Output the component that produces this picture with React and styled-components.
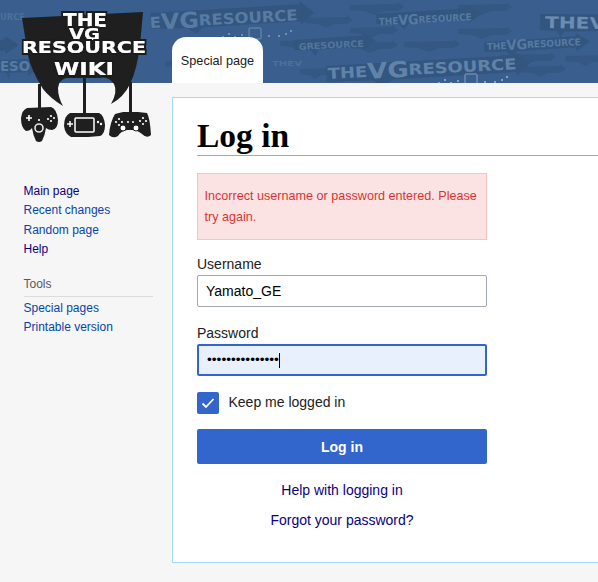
import React from "react";
import styled, { createGlobalStyle } from "styled-components";

const Global = createGlobalStyle`
  html, body { margin: 0; padding: 0; background: #f6f6f6; }
  body { font-family: "Liberation Sans", Arial, sans-serif; color: #202122; }
  * { box-sizing: border-box; }
`;

const Page = styled.div`
  position: relative;
  width: 598px;
  height: 582px;
  overflow: hidden;
  background: #f6f6f6;
`;

const Header = styled.header`
  position: relative;
  height: 83px;
  padding: 37px 0 0 172px;
  background: #3a5f8e;
  overflow: hidden;
`;

const Watermark = styled.svg`
  position: absolute;
  inset: 0;
  width: 598px;
  height: 83px;
`;

const Tab = styled.div`
  position: relative;
  width: 91px;
  height: 46px;
  padding-top: 17px;
  text-align: center;
  font-size: 12.7px;
  line-height: 15px;
  color: #202122;
  background: #fff;
  border-radius: 14px 14px 0 0;
`;

const LogoArt = styled.svg`
  position: absolute;
  left: 0;
  top: 0;
  width: 170px;
  height: 150px;
`;

const Body = styled.div`
  display: grid;
  grid-template-columns: 172px 1fr;
  padding-top: 14px;
`;

const Side = styled.nav`
  padding: 86px 19px 0 23.5px;
  font-size: 12px;
`;

const SideLink = styled.a`
  display: block;
  height: 19.4px;
  line-height: 15px;
  padding-top: 1px;
  color: ${(p) => (p.$visited ? "#0b0080" : "#0645ad")};
  text-decoration: none;
`;

const ToolsHead = styled.div`
  margin-top: 16px;
  padding-bottom: 4px;
  height: 20px;
  line-height: 15px;
  color: #54595d;
  border-bottom: 1px solid #dcdcdc;
  margin-bottom: 3px;
`;

const Content = styled.main`
  height: 466px;
  margin-right: -2px;
  padding: 21px 0 0 24px;
  background: #fff;
  border: 1px solid #a7d7f9;
`;

const Title = styled.h1`
  margin: 0 0 17px;
  height: 37px;
  font: bold 33.5px/33px "Liberation Serif", "Times New Roman", serif;
  color: #000;
  border-bottom: 1px solid #a2a9b1;
`;

const Form = styled.div`
  width: 290px;
`;

const ErrorBox = styled.div`
  height: 67px;
  padding: 12px 0 0 6.5px;
  font-size: 12.6px;
  line-height: 21px;
  color: #d33;
  background: #fbe3e4;
  border: 1px solid #fbc2c4;
`;

const Label = styled.label`
  display: block;
  height: 16px;
  margin-top: ${(p) => p.$top}px;
  margin-bottom: 3px;
  font-size: 14px;
  line-height: 16px;
  color: #202122;
`;

const Field = styled.div`
  height: 32px;
  padding: 0 8px;
  font-size: 14px;
  line-height: ${(p) => (p.$focus ? "28px" : "30px")};
  color: #000;
  background: ${(p) => (p.$focus ? "#e8f0fe" : "#fff")};
  border: ${(p) => (p.$focus ? "2px solid #36c" : "1px solid #a2a9b1")};
  border-radius: 2px;
  display: flex;
  align-items: center;
`;

const Dots = styled.span`
  font-size: 13.7px;
`;

const Caret = styled.span`
  width: 1px;
  height: 15px;
  background: #000;
`;

const CheckRow = styled.div`
  display: flex;
  align-items: center;
  gap: 10px;
  margin-top: 16px;
  font-size: 14px;
  color: #202122;
`;

const CheckBox = styled.span`
  display: flex;
  align-items: center;
  justify-content: center;
  width: 22px;
  height: 22px;
  background: #36c;
  border-radius: 2px;
`;

const CheckLabel = styled.span`
  position: relative;
  top: -1px;
  left: -0.5px;
`;

const Button = styled.button`
  display: block;
  width: 290px;
  height: 35px;
  margin-top: 15px;
  padding: 0;
  font: bold 14px "Liberation Sans", Arial, sans-serif;
  color: #fff;
  background: #36c;
  border: none;
  border-radius: 2px;
`;

const HelpLink = styled.a`
  display: block;
  height: 16px;
  margin-top: ${(p) => p.$top}px;
  font-size: 14px;
  line-height: 16px;
  text-align: center;
  color: #0b0080;
  text-decoration: none;
`;

function Arrow({ x, y, w, h = 14, rot = -3 }) {
  return (
    <polygon
      transform={`rotate(${rot} ${x} ${y})`}
      points={`${x},${y} ${x + w},${y - 1} ${x + w},${y - 4} ${x + w + 14},${y + h / 2} ${x + w},${y + h + 4} ${x + w},${y + h} ${x + w * 0.35},${y + h + 1} ${x + w * 0.3},${y + h + 7} ${x + w * 0.24},${y + h + 1} ${x},${y + h}`}
      fill="#335681"
    />
  );
}

function MiniArrow({ x, y, w = 45 }) {
  return (
    <polygon
      points={`${x},${y + 1} ${x + w},${y} ${x + w},${y - 2} ${x + w + 6},${y + 3} ${x + w},${y + 7} ${x + w * 0.7},${y + 7} ${x + w * 0.5},${y + 11} ${x + w * 0.3},${y + 7} ${x},${y + 6}`}
      fill="#345883"
    />
  );
}

function WmText({ x, y, size, width, rot = -3, color = "#6384ab", vg, rest, lead = "THE" }) {
  return (
    <text
      x={x}
      y={y}
      transform={`rotate(${rot} ${x} ${y})`}
      fontFamily="'DejaVu Sans', sans-serif"
      fontWeight="bold"
      fontSize={size}
      fill={color}
      textLength={width}
      lengthAdjust="spacingAndGlyphs"
    >
      {lead}
      {vg && <tspan fontSize={size * 1.45} dy={size * 0.12}>{vg}</tspan>}
      {rest && <tspan dy={vg ? -size * 0.12 : 0}>{rest}</tspan>}
    </text>
  );
}

function PadDots({ x, y, color = "#6f8fb4" }) {
  return (
    <g fill={color}>
      <rect x={x} y={y + 3} width="2" height="2" />
      <rect x={x + 6} y={y} width="2" height="2" />
      <rect x={x + 12} y={y + 3} width="2" height="2" />
      <rect x={x + 19} y={y + 1} width="2" height="2" />
      <rect x={x + 27} y={y - 5} width="12" height="11" rx="1" fill="none" stroke={color} strokeWidth="1" />
      <rect x={x + 46} y={y + 2} width="2" height="2" />
      <rect x={x + 56} y={y + 2} width="2" height="2" />
      <rect x={x + 63} y={y} width="2" height="2" />
      <rect x={x + 68} y={y - 3} width="2" height="2" />
    </g>
  );
}

function Banner() {
  return (
    <Watermark viewBox="0 0 598 83" aria-hidden="true">
      <MiniArrow x={305} y={17} w={42} />
      <MiniArrow x={350} y={27} w={42} />
      <MiniArrow x={350} y={4} w={48} />
      <MiniArrow x={458} y={4} w={48} />
      <MiniArrow x={348} y={42} w={44} />
      <MiniArrow x={458} y={28} w={48} />
      <MiniArrow x={404} y={41} w={50} />
      <MiniArrow x={500} y={54} w={50} />
      <MiniArrow x={565} y={55} w={40} />
      <MiniArrow x={520} y={66} w={40} />
      <MiniArrow x={300} y={68} w={30} />
      <MiniArrow x={200} y={36} w={40} />
      <MiniArrow x={165} y={60} w={40} />
      <MiniArrow x={280} y={40} w={40} />
      <Arrow x={376} y={14} w={92} h={10} />
      <Arrow x={294} y={40} w={68} h={10} />
      <Arrow x={484} y={42} w={92} h={10} />
      <Arrow x={326} y={66} w={190} h={16} />
      <Arrow x={150} y={13} w={150} h={16} />
      <Arrow x={540} y={14} w={70} h={16} rot={1} />
      <Arrow x={0} y={60} w={28} h={12} rot={0} />
      <Arrow x={0} y={40} w={5} h={10} rot={0} />
      <PadDots x={222} y={33} />
      <PadDots x={438} y={79} color="#86a2c2" />
      <WmText x={379} y={25} size={9.5} width={93} color="#567aa1" vg="VG" rest="RESOURCE" />
      <WmText x={299} y={50} size={9} width={65} color="#527699" lead="GRESOURCE" />
      <WmText x={487} y={50} size={9.5} width={94} color="#567aa1" vg="VG" rest="RESOURCE" />
      <WmText x={328} y={79} size={15} width={189} color="#6283a9" vg="VG" rest="RESOURCE" />
      <WmText x={150} y={28} size={15} width={148} color="#587ba3" lead="E" vg="VG" rest="RESOURCE" />
      <WmText x={545} y={28} size={16} width={60} rot={1} color="#6c8cb1" lead="THEV" />
      <WmText x={0} y={71} size={14} width={30} rot={0} color="#587ba3" lead="ESO" />
      <WmText x={0} y={20} size={9} width={25} rot={0} color="#4d709a" lead="URCE" />
      <WmText x={272} y={66} size={7} width={30} rot={0} color="#4d709a" lead="THEV" />
    </Watermark>
  );
}

function LogoLabel({ x, y, size, width, children }) {
  return (
    <text
      x={x}
      y={y}
      filter="url(#pixelType)"
      fontFamily="'DejaVu Sans', sans-serif"
      fontWeight="bold"
      fontSize={size}
      fill="#fff"
      textLength={width}
      lengthAdjust="spacingAndGlyphs"
    >
      {children}
    </text>
  );
}

function Logo() {
  const ink = "#1f1f1f";
  return (
    <LogoArt viewBox="0 0 170 150" aria-label="The VG Resource Wiki">
      <defs>
        <filter id="pixelType" x="-10%" y="-30%" width="120%" height="160%">
          <feMorphology in="SourceAlpha" operator="dilate" radius="2" result="edge" />
          <feFlood floodColor="#1f1f1f" />
          <feComposite in2="edge" operator="in" result="outline" />
          <feMerge>
            <feMergeNode in="outline" />
            <feMergeNode in="SourceGraphic" />
          </feMerge>
        </filter>
      </defs>
      <path
        d="M22 18 L143 12 L140 45 Q137 70 130 84 Q124 97 111 104 Q118 92 114 84 Q108 76 100 78 L66 78 Q59 80 58 88 Q58 97 63 106 Q50 98 43 89 Q31 70 28 55 Z"
        fill={ink}
      />
      <rect x="38" y="84" width="3" height="26" fill={ink} />
      <rect x="83" y="76" width="3" height="38" fill={ink} />
      <rect x="129" y="82" width="3" height="32" fill={ink} />

      <path
        d="M27 108 L51 107 Q57 109 58 120 Q58 129 52 130 Q48 130 46 128 Q45 135 42 141 Q39 143 36 141 Q33 135 32 128 Q30 131 26 131 Q21 128 21 118 Q22 110 27 108 Z"
        fill={ink}
      />
      <circle cx="39" cy="128" r="4" fill="none" stroke="#e8e8e8" strokeWidth="1.6" />
      <path d="M26 118h6M29 115v6" stroke="#fff" strokeWidth="1.6" />
      <circle cx="39" cy="120" r="1.1" fill="#fff" />
      <g fill="#fff">
        <circle cx="48" cy="119" r="1.1" /><circle cx="51" cy="116" r="1.1" />
        <circle cx="54" cy="118" r="1.1" /><circle cx="51" cy="121" r="1.1" />
      </g>

      <path
        d="M70 113 L99 113 Q104 115 105 125 Q105 134 100 136 L88 137 L80 137 L71 137 Q65 134 64 126 Q64 116 70 113 Z"
        fill={ink}
      />
      <rect x="75" y="118" width="19" height="14" rx="1" fill="none" stroke="#fff" strokeWidth="1.5" />
      <path d="M67 124h6M70 121v6" stroke="#fff" strokeWidth="1.5" />
      <circle cx="98" cy="122" r="1.2" fill="#fff" /><circle cx="101" cy="124" r="1.2" fill="#fff" />

      <path
        d="M115 114 L123 112 L138 112 L147 113 Q150 118 151 135 Q147 139 142 134 Q137 130 132 130 L127 130 Q121 131 118 136 Q113 139 109 135 Q110 122 115 114 Z"
        fill={ink}
      />
      <circle cx="123" cy="128" r="3" fill="#fff" stroke={ink} strokeWidth="1" />
      <circle cx="136" cy="128" r="3" fill="#fff" stroke={ink} strokeWidth="1" />
      <g fill="#fff">
        <circle cx="116" cy="122" r="1.1" /><circle cx="119" cy="119" r="1.1" />
        <circle cx="122" cy="122" r="1.1" /><circle cx="119" cy="125" r="1.1" />
        <circle cx="140" cy="121" r="1.1" /><circle cx="143" cy="118" r="1.1" />
        <circle cx="146" cy="121" r="1.1" /><circle cx="143" cy="124" r="1.1" />
        <circle cx="128" cy="122" r="1" /><circle cx="133" cy="122" r="1" />
      </g>

      <LogoLabel x={63} y={27} size={19} width={44}>THE</LogoLabel>
      <LogoLabel x={69} y={40} size={15} width={31}>VG</LogoLabel>
      <LogoLabel x={22} y={53} size={15.5} width={124}>RESOURCE</LogoLabel>
      <LogoLabel x={54} y={75} size={17.5} width={60}>WIKI</LogoLabel>
    </LogoArt>
  );
}

const navMain = [
  ["Main page", true],
  ["Recent changes", false],
  ["Random page", false],
  ["Help", true],
];

export default function App() {
  return (
    <Page>
      <Global />
      <Header>
        <Banner />
        <Tab>Special page</Tab>
      </Header>
      <Body>
        <Side>
          {navMain.map(([label, visited]) => (
            <SideLink key={label} href="#" $visited={visited}>{label}</SideLink>
          ))}
          <ToolsHead>Tools</ToolsHead>
          <SideLink href="#">Special pages</SideLink>
          <SideLink href="#">Printable version</SideLink>
        </Side>
        <Content>
          <Title>Log in</Title>
          <Form>
            <ErrorBox>Incorrect username or password entered. Please try again.</ErrorBox>
            <Label $top={16}>Username</Label>
            <Field>Yamato_GE</Field>
            <Label $top={18}>Password</Label>
            <Field $focus>
              <Dots>•••••••••••••••</Dots>
              <Caret />
            </Field>
            <CheckRow>
              <CheckBox>
                <svg width="14" height="12" viewBox="0 0 14 12" aria-hidden="true">
                  <path d="M1.5 6.5 L5 10 L12.5 2" fill="none" stroke="#fff" strokeWidth="1.8" />
                </svg>
              </CheckBox>
              <CheckLabel>Keep me logged in</CheckLabel>
            </CheckRow>
            <Button type="button">Log in</Button>
            <HelpLink href="#" $top={18}>Help with logging in</HelpLink>
            <HelpLink href="#" $top={14}>Forgot your password?</HelpLink>
          </Form>
        </Content>
      </Body>
      <Logo />
    </Page>
  );
}
